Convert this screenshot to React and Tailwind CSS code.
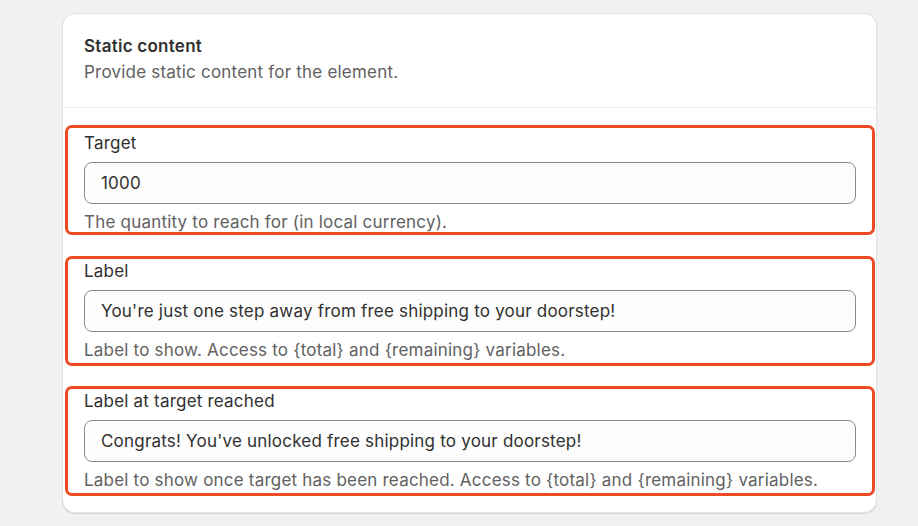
import { useState } from 'react'

const fields = [
  {
    key: 'target',
    label: 'Target',
    value: '1000',
    help: 'The quantity to reach for (in local currency).',
  },
  {
    key: 'label',
    label: 'Label',
    value: "You're just one step away from free shipping to your doorstep!",
    help: 'Label to show. Access to {total} and {remaining} variables.',
  },
  {
    key: 'reached',
    label: 'Label at target reached',
    value: "Congrats! You've unlocked free shipping to your doorstep!",
    help: 'Label to show once target has been reached. Access to {total} and {remaining} variables.',
  },
]

function Field({ label, value, help, onChange, first }) {
  return (
    <div
      className={
        'ml-[2px] mr-px border-[3px] border-[#ee4a26] rounded-[7px] pl-[16px] pr-[16px] ' +
        (first ? 'pt-[5px] pb-0 mb-px' : 'pt-[2px] pb-[3px]')
      }
    >
      <p className="h-5 leading-5 text-[17px] tracking-[0.012em] text-[#303030]">{label}</p>
      <input
        value={value}
        onChange={(e) => onChange(e.target.value)}
        className="mt-[9px] w-full h-[42px] px-4 bg-[#fdfdfd] border border-[#8a8a8a] rounded-[8px] text-[17px] tracking-[0.012em] text-[#303030] focus:outline-none"
      />
      <p className="mt-[8px] h-5 leading-5 text-[17px] tracking-[0.012em] text-[#616161]">{help}</p>
    </div>
  )
}

export default function App() {
  const [values, setValues] = useState(
    Object.fromEntries(fields.map((f) => [f.key, f.value]))
  )

  return (
    <div
      className="w-[918px] h-[526px] bg-[#f1f1f1] pt-[13px] pl-[62px] pr-[41px] antialiased"
      style={{ fontFamily: 'Inter, "Noto Sans", sans-serif' }}
    >
      <div className="h-[500px] bg-white border border-[#e3e3e3] rounded-[13px] shadow-[0_1px_1px_rgba(0,0,0,0.12)] overflow-hidden">
        <div className="px-[21px] pt-[20px] pb-[23px] border-b border-[#ebebeb]">
          <h2 className="leading-6 text-[17px] tracking-[0.015em] font-semibold text-[#303030]">Static content</h2>
          <p className="mt-[2px] leading-6 text-[17px] tracking-[0.012em] text-[#616161]">Provide static content for the element.</p>
        </div>
        <div className="pt-[17px] flex flex-col gap-[20px]">
          {fields.map((f, i) => (
            <Field
              key={f.key}
              first={i === 0}
              label={f.label}
              value={values[f.key]}
              help={f.help}
              onChange={(v) => setValues({ ...values, [f.key]: v })}
            />
          ))}
        </div>
      </div>
    </div>
  )
}
